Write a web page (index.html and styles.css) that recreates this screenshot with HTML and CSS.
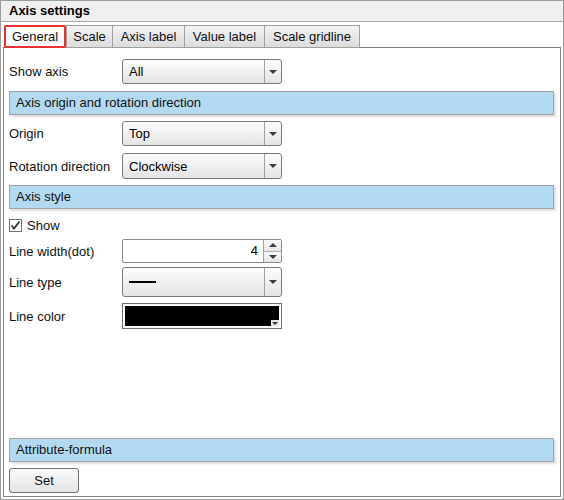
FILE: index.html
```html
<!DOCTYPE html>
<html>
<head>
<meta charset="utf-8">
<title>Axis settings</title>
<link rel="stylesheet" href="styles.css">
</head>
<body>
<div class="window">
  <div class="titlebar">Axis settings</div>
  <div class="tabs">
    <div class="tab tab-general active">General</div>
    <div class="tab tab-scale">Scale</div>
    <div class="tab tab-axis">Axis label</div>
    <div class="tab tab-value">Value label</div>
    <div class="tab tab-grid">Scale gridline</div>
  </div>
  <div class="panel">
    <div class="row row-first">
      <div class="label">Show axis</div>
      <div class="select"><span class="select-text">All</span><span class="select-btn"><i class="tri"></i></span></div>
    </div>
    <div class="section section-origin">Axis origin and rotation direction</div>
    <div class="row row-origin">
      <div class="label">Origin</div>
      <div class="select"><span class="select-text">Top</span><span class="select-btn"><i class="tri"></i></span></div>
    </div>
    <div class="row row-rotation">
      <div class="label">Rotation direction</div>
      <div class="select"><span class="select-text">Clockwise</span><span class="select-btn"><i class="tri"></i></span></div>
    </div>
    <div class="section section-style">Axis style</div>
    <div class="check-row">
      <svg class="checkbox" width="13" height="13" viewBox="0 0 13 13">
        <rect x="0.5" y="0.5" width="12" height="12" fill="#fff" stroke="#707070"/>
        <path d="M2.5 6.5 L5 9.5 L10.5 2.5" fill="none" stroke="#333" stroke-width="1.8"/>
      </svg>
      <span class="check-label">Show</span>
    </div>
    <div class="row row-spin">
      <div class="label">Line width(dot)</div>
      <div class="spin">
        <span class="spin-value">4</span>
        <span class="spin-btns">
          <span class="spin-up"><i class="tri-up"></i></span>
          <span class="spin-down"><i class="tri"></i></span>
        </span>
      </div>
    </div>
    <div class="row row-type">
      <div class="label">Line type</div>
      <div class="select select-tall"><span class="select-text"><span class="line-sample"></span></span><span class="select-btn"><i class="tri"></i></span></div>
    </div>
    <div class="row row-color">
      <div class="label">Line color</div>
      <div class="color-box"><span class="color-fill"></span><span class="color-arrow"><i class="tri-small"></i></span></div>
    </div>
    <div class="section section-attr">Attribute-formula</div>
    <div class="btn-row">
      <div class="button">Set</div>
    </div>
  </div>
</div>
</body>
</html>
```
FILE: styles.css
```css
* { box-sizing: border-box; }
html, body { margin: 0; padding: 0; background: #fff; }
body {
  font-family: "Liberation Sans", Arial, sans-serif;
  font-size: 13px;
  color: #111;
}
.window {
  width: 564px;
  height: 500px;
  border: 1px solid #9c9c9c;
  display: flex;
  flex-direction: column;
  background: #fff;
}
.titlebar {
  height: 21px;
  background: #f0f0f0;
  border-bottom: 1px solid #a8a8a8;
  padding-left: 8px;
  font-weight: bold;
  line-height: 20px;
  color: #000;
}
.tabs {
  display: flex;
  margin-top: 3px;
  padding-left: 3px;
  height: 22px;
  position: relative;
  z-index: 1;
}
.tab {
  height: 23px;
  border: 1px solid #a0a0a0;
  border-left: none;
  background: linear-gradient(#f3f3f3, #dcdcdc);
  text-align: center;
  line-height: 21px;
  color: #111;
}
.tab-general { width: 62px; }
.tab-scale { width: 47px; border-left: 1px solid #a0a0a0; }
.tab-axis { width: 72px; }
.tab-value { width: 80px; }
.tab-grid { width: 95px; }
.tab.active {
  background: #fff;
  border: 2px solid #e8312f;
  border-radius: 2px;
  line-height: 19px;
  height: 23px;
}
.panel {
  flex: 1;
  margin: 0 2px 2px 2px;
  border: 1px solid #808080;
  padding: 11px 5px 3px 5px;
  display: flex;
  flex-direction: column;
}
.row {
  display: flex;
  align-items: center;
  height: 25px;
}
.label { width: 113px; }
.row-origin { margin-top: 6px; }
.row-rotation { margin-top: 7px; height: 26px; }
.row-spin { margin-top: 5px; height: 24px; }
.row-type { margin-top: 4px; height: 30px; }
.row-color { margin-top: 6px; height: 26px; }

.select {
  width: 160px;
  height: 100%;
  border: 1px solid #7a7a7a;
  border-radius: 3px;
  background: linear-gradient(#fdfdfd, #e4e4e4);
  display: flex;
  align-items: stretch;
}
.select-text {
  flex: 1;
  padding-left: 6px;
  display: flex;
  align-items: center;
  color: #000;
}
.select-btn {
  width: 17px;
  border-left: 1px solid #a0a0a0;
  display: flex;
  align-items: center;
  justify-content: center;
}
.tri {
  width: 0;
  height: 0;
  border-left: 4px solid transparent;
  border-right: 4px solid transparent;
  border-top: 4px solid #3c3c3c;
}
.tri-up {
  width: 0;
  height: 0;
  border-left: 4px solid transparent;
  border-right: 4px solid transparent;
  border-bottom: 4px solid #3c3c3c;
}
.tri-small {
  width: 0;
  height: 0;
  border-left: 3px solid transparent;
  border-right: 3px solid transparent;
  border-top: 3px solid #3c3c3c;
}
.line-sample {
  width: 27px;
  height: 2px;
  background: #000;
}

.section {
  height: 24px;
  margin-top: 6px;
  background: #b3d9f0;
  border: 1px solid #a3a3a3;
  box-shadow: 2px 2px 2px rgba(0,0,0,0.14);
  padding-left: 6px;
  line-height: 22px;
  color: #111;
  margin-right: 1px;
}
.section-origin { margin-top: 7px; }
.section-style { margin-top: 6px; }
.section-attr { margin-top: auto; }

.check-row {
  display: flex;
  align-items: center;
  height: 18px;
  margin-top: 7px;
}
.checkbox { display: block; }
.check-label { margin-left: 5px; }

.spin {
  width: 160px;
  height: 100%;
  border: 1px solid #8a8a8a;
  border-radius: 2px;
  background: #fff;
  display: flex;
}
.spin-value {
  flex: 1;
  text-align: right;
  padding-right: 5px;
  line-height: 22px;
  color: #000;
}
.spin-btns {
  width: 18px;
  border-left: 1px solid #a0a0a0;
  display: flex;
  flex-direction: column;
}
.spin-up, .spin-down {
  flex: 1;
  display: flex;
  align-items: center;
  justify-content: center;
  background: linear-gradient(#fafafa, #e6e6e6);
}
.spin-up { border-bottom: 1px solid #b0b0b0; }

.color-box {
  width: 160px;
  height: 100%;
  border: 1px solid #707070;
  padding: 2px;
  background: #fff;
  position: relative;
}
.color-fill {
  display: block;
  width: 100%;
  height: 100%;
  background: #000;
}
.color-arrow {
  position: absolute;
  right: 2px;
  bottom: 2px;
  width: 8px;
  height: 6px;
  background: #e8e8e8;
  display: flex;
  align-items: center;
  justify-content: center;
}

.btn-row { margin-top: 6px; }
.button {
  width: 70px;
  height: 25px;
  border: 1px solid #707070;
  border-radius: 3px;
  background: linear-gradient(#fbfbfb, #e2e2e2);
  text-align: center;
  line-height: 23px;
  color: #111;
}
```
